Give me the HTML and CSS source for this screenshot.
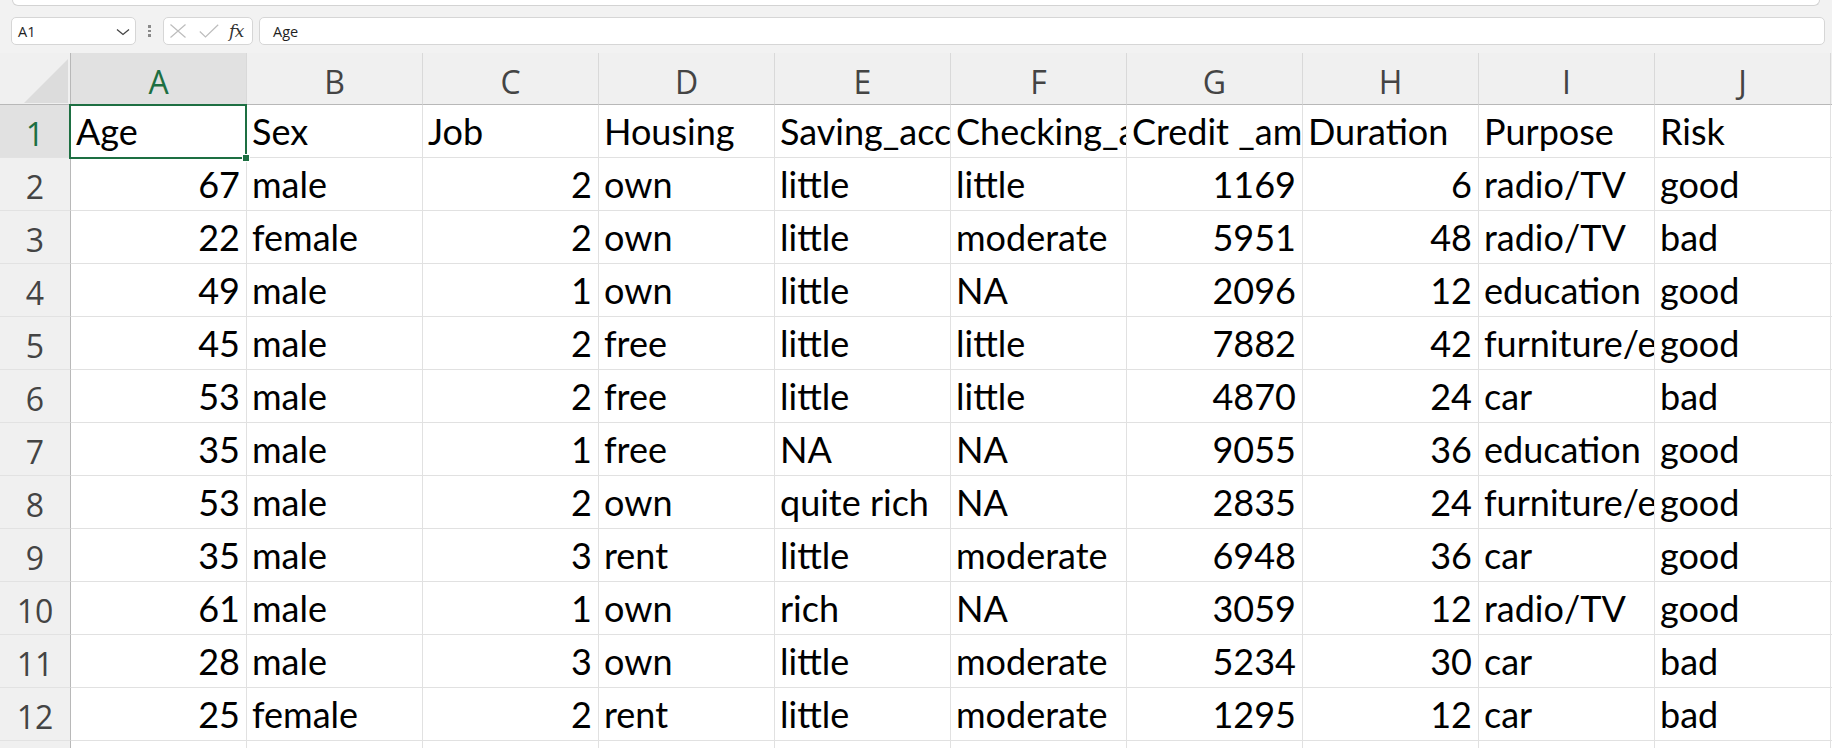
FILE: index.html
```html
<!DOCTYPE html>
<html>
<head>
<meta charset="utf-8">
<link rel="stylesheet" href="styles.css">
</head>
<body>
<div class="app">
  <div class="ribbon-edge"></div>
  <div class="fbar">
    <div class="namebox">
      <span class="nb-text">A1</span>
      <svg class="chev" width="14" height="8" viewBox="0 0 14 8"><path d="M1 1.5 L7 6.5 L13 1.5" fill="none" stroke="#444" stroke-width="1.3"/></svg>
    </div>
    <div class="dots"><i></i><i></i><i></i></div>
    <div class="fxbox">
      <svg class="ico" width="18" height="14" viewBox="0 0 18 14"><path d="M1.5 0.5 L16.5 13.5 M16.5 0.5 L1.5 13.5" stroke="#bdbdbd" stroke-width="1.2" fill="none"/></svg>
      <svg class="ico" width="20" height="14" viewBox="0 0 20 14"><path d="M0.8 7.5 L6.5 13 L19.2 0.8" stroke="#bdbdbd" stroke-width="1.2" fill="none"/></svg>
      <span class="fx">fx</span>
    </div>
    <div class="finput">Age</div>
  </div>
  <div class="sheet">
    <div class="corner"><div class="tri"></div></div>
    <div class="ch sel">A</div>
    <div class="ch">B</div>
    <div class="ch">C</div>
    <div class="ch">D</div>
    <div class="ch">E</div>
    <div class="ch">F</div>
    <div class="ch">G</div>
    <div class="ch">H</div>
    <div class="ch">I</div>
    <div class="ch">J</div>
    <div class="ch rest"></div>

    <div class="rh sel">1</div>
    <div class="c active">Age<div class="selbox"><div class="handle"></div></div></div>
    <div class="c">Sex</div><div class="c">Job</div><div class="c">Housing</div><div class="c">Saving_accounts</div><div class="c">Checking_account</div><div class="c">Credit _amount</div><div class="c">Duration</div><div class="c">Purpose</div><div class="c">Risk</div><div class="c rest"></div>

    <div class="rh">2</div>
    <div class="c n">67</div><div class="c">male</div><div class="c n">2</div><div class="c">own</div><div class="c">little</div><div class="c">little</div><div class="c n">1169</div><div class="c n">6</div><div class="c">radio/TV</div><div class="c">good</div><div class="c rest"></div>

    <div class="rh">3</div>
    <div class="c n">22</div><div class="c">female</div><div class="c n">2</div><div class="c">own</div><div class="c">little</div><div class="c">moderate</div><div class="c n">5951</div><div class="c n">48</div><div class="c">radio/TV</div><div class="c">bad</div><div class="c rest"></div>

    <div class="rh">4</div>
    <div class="c n">49</div><div class="c">male</div><div class="c n">1</div><div class="c">own</div><div class="c">little</div><div class="c">NA</div><div class="c n">2096</div><div class="c n">12</div><div class="c">education</div><div class="c">good</div><div class="c rest"></div>

    <div class="rh">5</div>
    <div class="c n">45</div><div class="c">male</div><div class="c n">2</div><div class="c">free</div><div class="c">little</div><div class="c">little</div><div class="c n">7882</div><div class="c n">42</div><div class="c">furniture/equipment</div><div class="c">good</div><div class="c rest"></div>

    <div class="rh">6</div>
    <div class="c n">53</div><div class="c">male</div><div class="c n">2</div><div class="c">free</div><div class="c">little</div><div class="c">little</div><div class="c n">4870</div><div class="c n">24</div><div class="c">car</div><div class="c">bad</div><div class="c rest"></div>

    <div class="rh">7</div>
    <div class="c n">35</div><div class="c">male</div><div class="c n">1</div><div class="c">free</div><div class="c">NA</div><div class="c">NA</div><div class="c n">9055</div><div class="c n">36</div><div class="c">education</div><div class="c">good</div><div class="c rest"></div>

    <div class="rh">8</div>
    <div class="c n">53</div><div class="c">male</div><div class="c n">2</div><div class="c">own</div><div class="c">quite rich</div><div class="c">NA</div><div class="c n">2835</div><div class="c n">24</div><div class="c">furniture/equipment</div><div class="c">good</div><div class="c rest"></div>

    <div class="rh">9</div>
    <div class="c n">35</div><div class="c">male</div><div class="c n">3</div><div class="c">rent</div><div class="c">little</div><div class="c">moderate</div><div class="c n">6948</div><div class="c n">36</div><div class="c">car</div><div class="c">good</div><div class="c rest"></div>

    <div class="rh">10</div>
    <div class="c n">61</div><div class="c">male</div><div class="c n">1</div><div class="c">own</div><div class="c">rich</div><div class="c">NA</div><div class="c n">3059</div><div class="c n">12</div><div class="c">radio/TV</div><div class="c">good</div><div class="c rest"></div>

    <div class="rh">11</div>
    <div class="c n">28</div><div class="c">male</div><div class="c n">3</div><div class="c">own</div><div class="c">little</div><div class="c">moderate</div><div class="c n">5234</div><div class="c n">30</div><div class="c">car</div><div class="c">bad</div><div class="c rest"></div>

    <div class="rh">12</div>
    <div class="c n">25</div><div class="c">female</div><div class="c n">2</div><div class="c">rent</div><div class="c">little</div><div class="c">moderate</div><div class="c n">1295</div><div class="c n">12</div><div class="c">car</div><div class="c">bad</div><div class="c rest"></div>

    <div class="rh">13</div>
    <div class="c"></div><div class="c"></div><div class="c"></div><div class="c"></div><div class="c"></div><div class="c"></div><div class="c"></div><div class="c"></div><div class="c"></div><div class="c"></div><div class="c rest"></div>
  </div>
</div>
</body>
</html>
```
FILE: styles.css
```css
* { box-sizing: border-box; }
html, body {
  margin: 0;
  padding: 0;
  width: 1832px;
  height: 748px;
  overflow: hidden;
  background: #f2f2f2;
}
.app {
  width: 1832px;
  height: 748px;
  overflow: hidden;
  display: flex;
  flex-direction: column;
}
.ribbon-edge {
  height: 6px;
  margin: 0 12px;
  background: #ffffff;
  border: 1px solid #d3d3d3;
  border-top: none;
  border-radius: 0 0 7px 7px;
  flex: none;
}
.fbar {
  flex: none;
  height: 28px;
  margin: 11px 0 8px 0;
  display: flex;
  align-items: stretch;
  font-family: "Open Sans", "Noto Sans", sans-serif;
  font-size: 14.5px;
  color: #222;
}
.namebox {
  margin-left: 11px;
  width: 125px;
  background: #fff;
  border: 1px solid #d6d6d6;
  border-radius: 5px;
  display: flex;
  align-items: center;
  justify-content: space-between;
  padding: 0 5px 0 6px;
}
.nb-text { color: #1f1f1f; }
.chev { display: block; margin-top: 1px; }
.dots {
  width: 27px;
  display: flex;
  flex-direction: column;
  align-items: center;
  justify-content: center;
  gap: 2px;
}
.dots i {
  display: block;
  width: 2.5px;
  height: 2.5px;
  background: #8a8a8a;
}
.fxbox {
  width: 90px;
  background: #fff;
  border: 1px solid #d6d6d6;
  border-radius: 5px;
  display: flex;
  align-items: center;
  padding: 0 4px 0 5px;
  gap: 0;
}
.fxbox .ico { display: block; }
.fxbox .ico:first-child { margin-right: 12px; }
.fx {
  margin-left: 10px;
  font-family: "DejaVu Serif", "Liberation Serif", serif;
  font-style: italic;
  font-size: 17px;
  color: #333;
  letter-spacing: -0.5px;
}
.finput {
  margin-left: 6px;
  margin-right: 7px;
  flex: 1;
  background: #fff;
  border: 1px solid #d6d6d6;
  border-radius: 5px;
  display: flex;
  align-items: center;
  padding-left: 13px;
  color: #1f1f1f;
}

.sheet {
  flex: 1;
  display: grid;
  grid-template-columns: 71px repeat(10, 176px) 1fr;
  grid-template-rows: 52px repeat(13, 53px);
  background: #fff;
}
.corner {
  background: #f0f0f0;
  border-right: 1px solid #b8b8b8;
  border-bottom: 1px solid #b8b8b8;
  display: flex;
  align-items: flex-end;
  justify-content: flex-end;
  padding: 0 2px 1px 0;
}
.tri {
  width: 44px;
  height: 44px;
  background: #dcdcdc;
  clip-path: polygon(100% 0, 100% 100%, 0 100%);
}
.ch {
  background: #f0f0f0;
  border-right: 1px solid #d9d9d9;
  border-bottom: 1px solid #b8b8b8;
  font-family: "Open Sans", "Noto Sans", sans-serif;
  font-size: 32px;
  line-height: 42px;
  color: #444;
  display: flex;
  align-items: flex-end;
  justify-content: center;
  padding-bottom: 1px;
}
.ch.sel {
  background: #e1e1e1;
  color: #1d6f42;
}
.ch.rest { border-right: none; }
.rh {
  background: #f0f0f0;
  border-right: 1px solid #b8b8b8;
  border-bottom: 1px solid #e2e2e2;
  font-family: "Open Sans", "Noto Sans", sans-serif;
  font-size: 32px;
  line-height: 42px;
  color: #444;
  display: flex;
  align-items: flex-end;
  justify-content: center;
  padding-bottom: 2px;
}
.rh.sel {
  background: #e1e1e1;
  color: #1d6f42;
}
.c {
  position: relative;
  border-right: 1px solid #e1e1e1;
  border-bottom: 1px solid #e1e1e1;
  font-family: Lato, "Liberation Sans", sans-serif;
  font-size: 36px;
  line-height: 43px;
  color: #000;
  white-space: nowrap;
  overflow: hidden;
  display: flex;
  align-items: flex-end;
  padding: 0 0 4px 5px;
}
.c.n {
  justify-content: flex-end;
  padding: 0 6px 4px 0;
}
.c.rest { border-right: none; }
.c.active { overflow: visible; z-index: 2; }
.selbox {
  position: absolute;
  left: -2px;
  top: -1px;
  right: -1px;
  bottom: -2px;
  border: 2px solid #1d6f42;
  pointer-events: none;
}
.handle {
  position: absolute;
  right: -5px;
  bottom: -5px;
  width: 8px;
  height: 8px;
  background: #1d6f42;
  border: 1px solid #fff;
}
```
